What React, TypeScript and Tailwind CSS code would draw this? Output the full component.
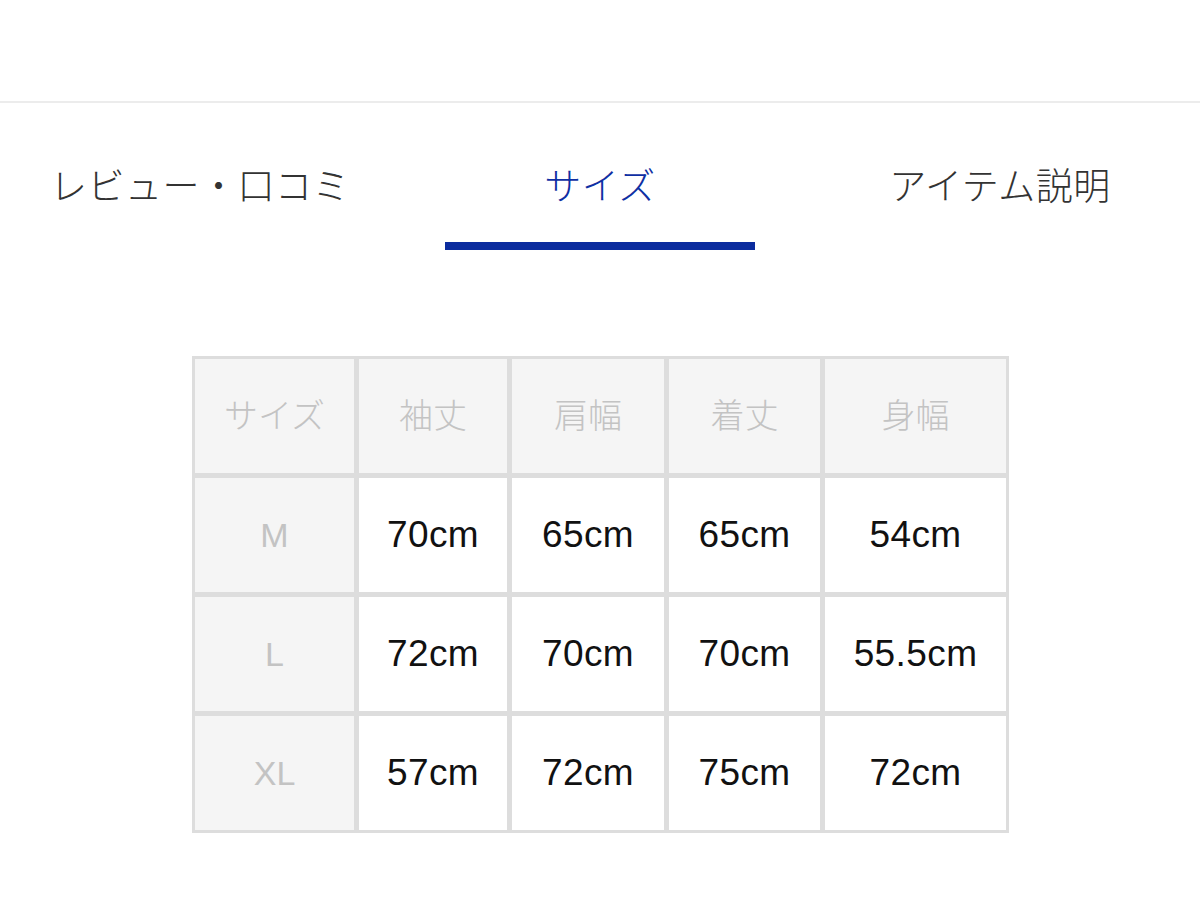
const HEAD = ["サイズ", "袖丈", "肩幅", "着丈", "身幅"];

const ROWS = [
  ["M", "70cm", "65cm", "65cm", "54cm"],
  ["L", "72cm", "70cm", "70cm", "55.5cm"],
  ["XL", "57cm", "72cm", "75cm", "72cm"],
];

const FONT = "font-['Liberation_Sans','Noto_Sans_CJK_JP',sans-serif]";

export default function App() {
  return (
    <div className={`h-[906px] w-[1200px] bg-white ${FONT}`}>
      <div className="h-[101px]" />
      <div className="h-[2px] bg-[#ececec]" />

      <div className="grid grid-cols-3 pt-[61px]">
        <div className="flex flex-col items-center">
          <span className="text-[37px] font-light leading-[48px] tracking-[0.5px] text-[#333333]">レビュー・口コミ</span>
        </div>
        <div className="flex flex-col items-center">
          <span className="text-[37px] font-light leading-[48px] tracking-[0.5px] text-[#0f2fa3]">サイズ</span>
          <div className="mt-[30px] h-[8px] w-[310px] bg-[#0b2c9e]" />
        </div>
        <div className="flex flex-col items-center">
          <span className="text-[37px] font-light leading-[48px] tracking-[0.5px] text-[#333333]">アイテム説明</span>
        </div>
      </div>

      <div className="mt-[106px] ml-[192px] w-fit bg-[#dddddd] p-[3px]">
        <div className="grid grid-cols-[159px_148px_152px_151px_181px] auto-rows-[114px] gap-[5px]">
          {HEAD.map((h) => (
            <div key={h} className="flex items-center justify-center bg-[#f5f5f5] text-[34px] font-light text-[#c3c3c3]">
              {h}
            </div>
          ))}
          {ROWS.map((row) =>
            row.map((cell, i) => (
              <div
                key={row[0] + i}
                className={
                  i === 0
                    ? "flex items-center justify-center bg-[#f5f5f5] text-[34px] text-[#c3c3c3]"
                    : "flex items-center justify-center bg-white text-[37px] tracking-[0.4px] text-[#111111]"
                }
              >
                {cell}
              </div>
            ))
          )}
        </div>
      </div>
    </div>
  );
}
